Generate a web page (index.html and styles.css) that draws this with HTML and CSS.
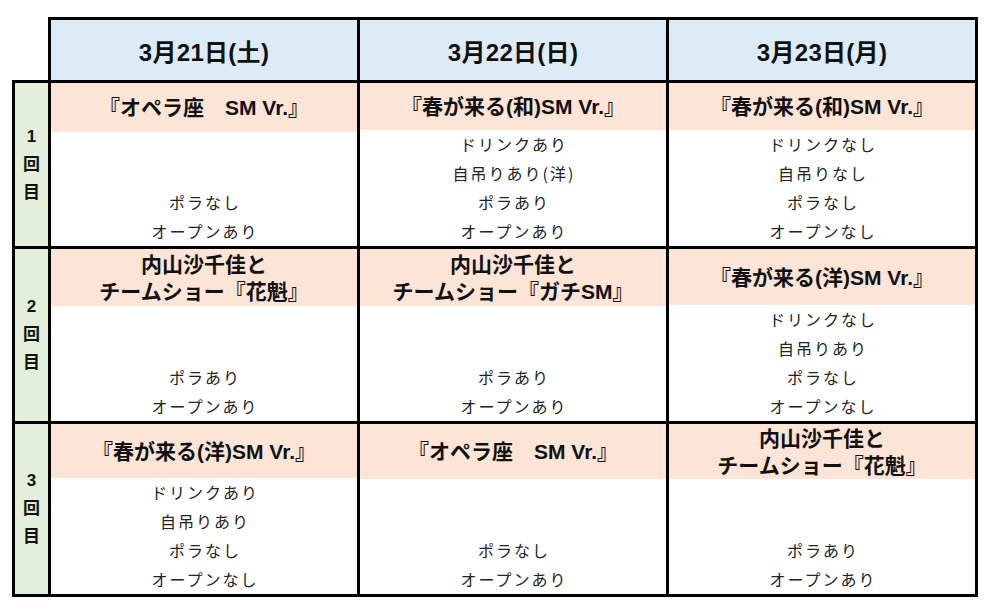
FILE: index.html
```html
<!DOCTYPE html>
<html lang="ja">
<head>
<meta charset="utf-8">
<title>スケジュール</title>
<link rel="stylesheet" href="styles.css">
</head>
<body>
<div class="sheet">
  <div class="head">
    <div class="hcell">3月21日(土)</div>
    <div class="hcell">3月22日(日)</div>
    <div class="hcell">3月23日(月)</div>
  </div>
  <div class="grid">
    <div class="label"><span>1</span><span>回</span><span>目</span></div>
    <div class="cell r1">
      <div class="title">『オペラ座　SM Vr.』</div>
      <div class="notes"><span>ポラなし</span><span>オープンあり</span></div>
    </div>
    <div class="cell r1">
      <div class="title">『春が来る(和)SM Vr.』</div>
      <div class="notes"><span>ドリンクあり</span><span>自吊りあり(洋)</span><span>ポラあり</span><span>オープンあり</span></div>
    </div>
    <div class="cell r1">
      <div class="title">『春が来る(和)SM Vr.』</div>
      <div class="notes"><span>ドリンクなし</span><span>自吊りなし</span><span>ポラなし</span><span>オープンなし</span></div>
    </div>

    <div class="label"><span>2</span><span>回</span><span>目</span></div>
    <div class="cell r2">
      <div class="title">内山沙千佳と<br>チームショー『花魁』</div>
      <div class="notes"><span>ポラあり</span><span>オープンあり</span></div>
    </div>
    <div class="cell r2">
      <div class="title">内山沙千佳と<br>チームショー『ガチSM』</div>
      <div class="notes"><span>ポラあり</span><span>オープンあり</span></div>
    </div>
    <div class="cell r2">
      <div class="title">『春が来る(洋)SM Vr.』</div>
      <div class="notes"><span>ドリンクなし</span><span>自吊りあり</span><span>ポラなし</span><span>オープンなし</span></div>
    </div>

    <div class="label"><span>3</span><span>回</span><span>目</span></div>
    <div class="cell r3">
      <div class="title">『春が来る(洋)SM Vr.』</div>
      <div class="notes"><span>ドリンクあり</span><span>自吊りあり</span><span>ポラなし</span><span>オープンなし</span></div>
    </div>
    <div class="cell r3">
      <div class="title">『オペラ座　SM Vr.』</div>
      <div class="notes"><span>ポラなし</span><span>オープンあり</span></div>
    </div>
    <div class="cell r3">
      <div class="title">内山沙千佳と<br>チームショー『花魁』</div>
      <div class="notes"><span>ポラあり</span><span>オープンあり</span></div>
    </div>
  </div>
</div>
</body>
</html>
```
FILE: styles.css
```css
html, body {
  margin: 0;
  padding: 0;
  background: #ffffff;
}

.sheet {
  padding: 17px 0 0 12px;
  font-family: "Liberation Sans", "Noto Sans CJK JP", sans-serif;
  color: #111;
}

.head {
  margin-left: 36px;
  width: 924px;
  display: grid;
  grid-template-columns: 306px 306px 306px;
  gap: 3px;
  padding: 3px 3px 0 3px;
  background: #000;
}

.hcell {
  height: 60px;
  background: #DDEBF7;
  display: flex;
  align-items: center;
  justify-content: center;
  font-weight: bold;
  font-size: 24px;
  letter-spacing: 0.3px;
}

.grid {
  width: 960px;
  display: grid;
  grid-template-columns: 33px 306px 306px 306px;
  grid-template-rows: 163px 172px 170px;
  gap: 3px;
  padding: 3px;
  background: #000;
}

.label {
  background: #E2EFDA;
  display: flex;
  flex-direction: column;
  align-items: center;
  justify-content: center;
  font-weight: bold;
  font-size: 17px;
  line-height: 28px;
}

.cell {
  background: #fff;
  display: flex;
  flex-direction: column;
}

.title {
  background: #FCE4D6;
  display: flex;
  align-items: center;
  justify-content: center;
  text-align: center;
  font-weight: bold;
  font-size: 21px;
  line-height: 27px;
}

.r1 .title { height: 49px; }
.r2 .title { height: 57px; }
.r3 .title { height: 55px; }

.notes {
  flex: 1;
  display: flex;
  flex-direction: column;
  justify-content: flex-end;
  align-items: center;
  font-family: "Noto Sans CJK JP", sans-serif;
  font-size: 16px;
  letter-spacing: 2px;
  line-height: 29px;
  color: #222;
  padding-left: 2px;
}
```
